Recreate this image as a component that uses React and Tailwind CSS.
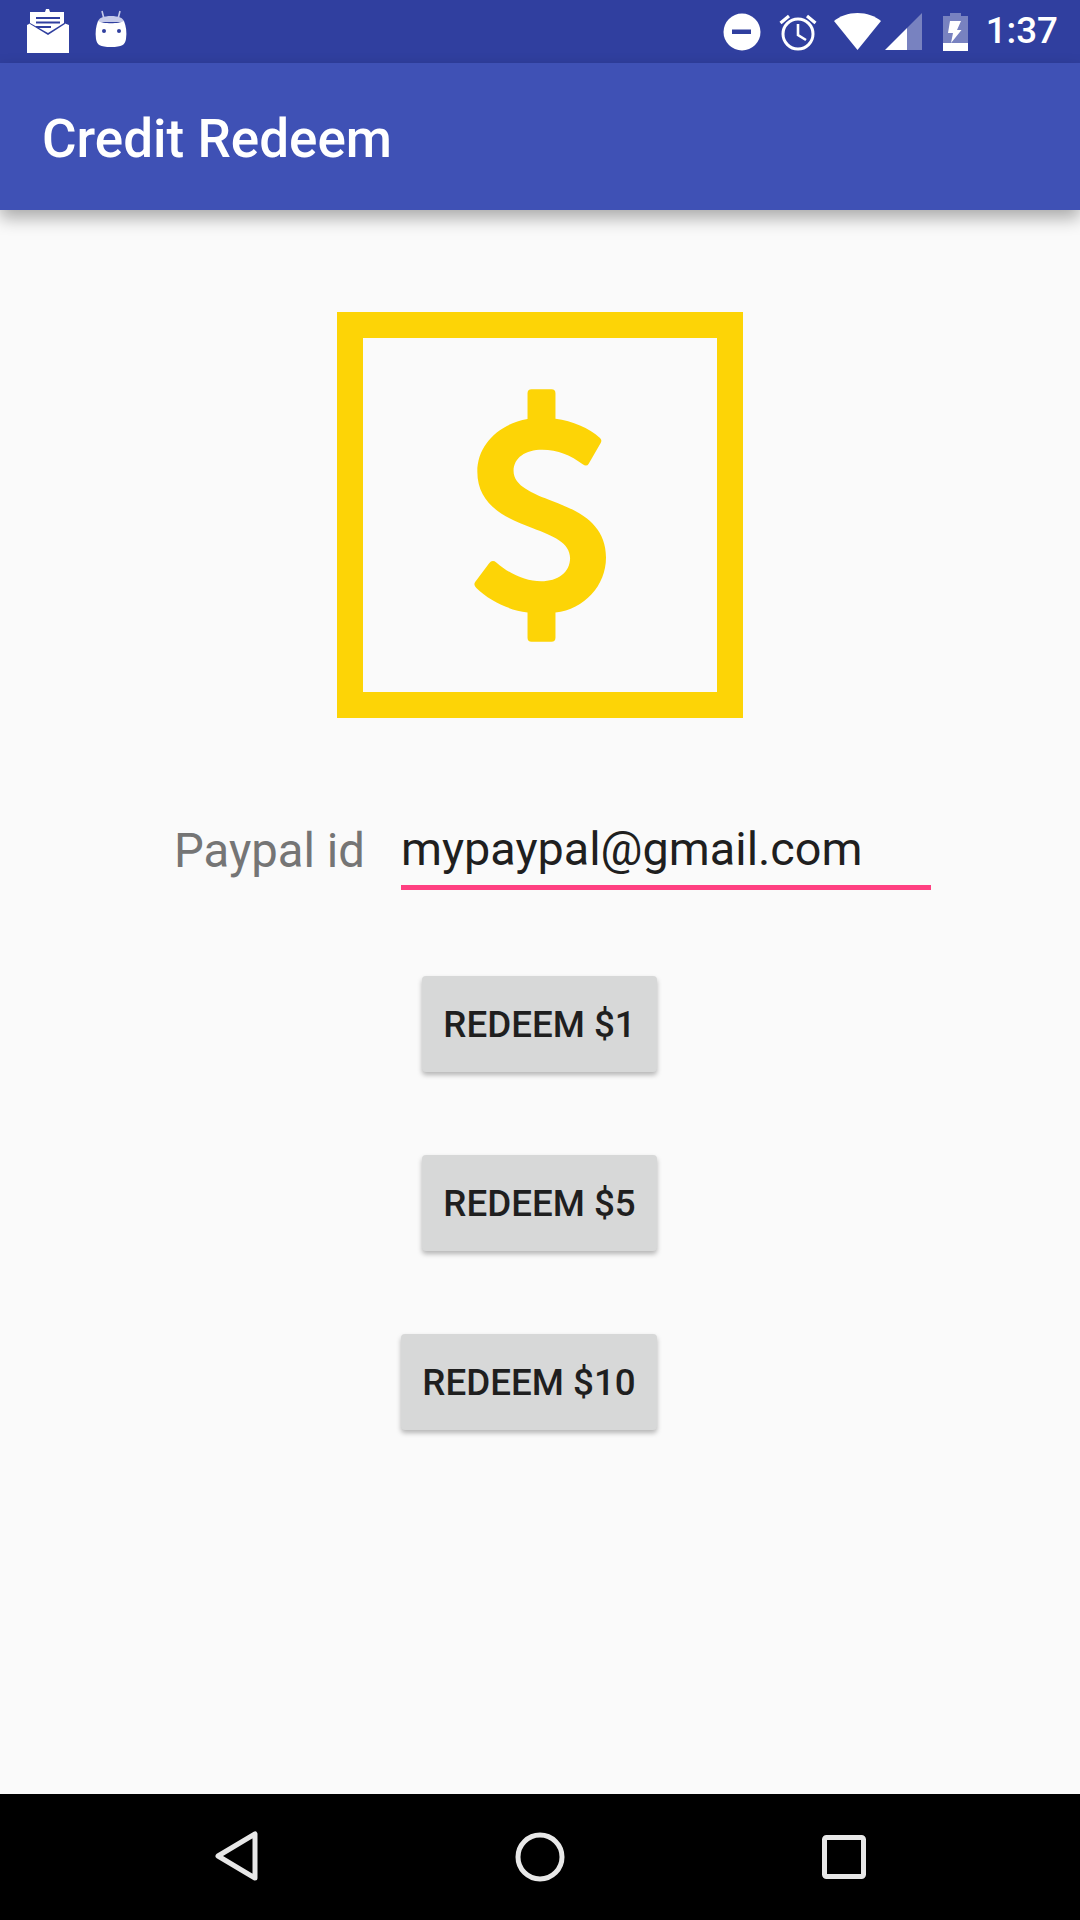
import React from "react";

function MailIcon() {
  return (
    <svg width="42" height="44" viewBox="0 0 42 44">
      <path d="M3 3H37V14L21 24L3 14Z" fill="#fff" />
      <path d="M19 0h3l1 3h-5z" fill="#fff" />
      <path d="M9 8H33V10H9ZM9 12.5H33V14.500H9ZM9 17H24V19H9Z" fill="#303f9f" />
      <path d="M0 16L3 14.500V15L21 26L38 15V14.500L42 16V44H0Z" fill="#fff" />
    </svg>
  );
}

function BotIcon() {
  return (
    <svg width="32" height="38" viewBox="0 0 32 38">
      <path d="M7 1L9 9M25 1L23 9" stroke="#c5cae9" strokeWidth="1.6" fill="none" />
      <path d="M3 12C3 8 9 6 16 6C23 6 29 8 29 12Z" fill="#c5cae9" />
      <path d="M3 11C8 14 24 14 29 11C31 16 32 22 31 29C30 35 27 37 16 37C5 37 2 35 1 29C0 22 1 16 3 11Z" fill="#fff" />
      <circle cx="9" cy="21" r="2" fill="#303f9f" />
      <circle cx="24" cy="21" r="2" fill="#303f9f" />
    </svg>
  );
}

function DndIcon() {
  return (
    <svg width="38" height="38" viewBox="0 0 38 38">
      <circle cx="19" cy="19" r="18.5" fill="#fff" />
      <rect x="9" y="16.5" width="19" height="4.5" fill="#303f9f" />
    </svg>
  );
}

function AlarmIcon() {
  return (
    <svg width="38" height="38" viewBox="0 0 38 38" fill="none" stroke="#fff">
      <circle cx="19" cy="21" r="15" strokeWidth="3" />
      <path d="M19 11V22L27 27" strokeWidth="2.6" />
      <path d="M1.5 10L10 3M36.5 10L28 3" strokeWidth="3.2" />
    </svg>
  );
}

function WifiIcon() {
  return (
    <svg width="47" height="37" viewBox="0 0 47 37">
      <path d="M0 8C6 3 14 0 23.5 0C33 0 41 3 47 8L23.5 37Z" fill="#fff" />
    </svg>
  );
}

function SignalIcon() {
  return (
    <svg width="37" height="37" viewBox="0 0 37 37">
      <path d="M37 0V37H22V15Z" fill="#fff" fillOpacity="0.35" />
      <path d="M22 15V37H0Z" fill="#fff" />
    </svg>
  );
}

function BatteryIcon() {
  return (
    <svg width="25" height="38" viewBox="0 0 25 38">
      <path d="M0 3H7V0H18V3H25V30H0Z" fill="#fff" fillOpacity="0.35" />
      <rect x="0" y="30" width="25" height="8" fill="#fff" />
      <path d="M7 8H18L14 17H18.500L8 30L10 20H5Z" fill="#fff" />
    </svg>
  );
}

function DollarIcon() {
  return (
    <svg width="132" height="253" viewBox="463 264 397 760">
      <path
        d="M636 264H696Q708 264 708 276V353C760 360 808 380 842 411Q849 418 844 426L808 488Q802 498 790 490C755 463 715 446 668 446C618 446 582 470 582 510C582 555 640 578 700 601C780 631 860 670 860 770C860 855 795 925 708 936V1012Q708 1024 696 1024H636Q624 1024 624 1012V936C565 928 510 900 470 862Q460 852 467 843L508 788Q518 775 530 785C570 820 618 842 665 842C715 842 752 815 752 772C752 725 700 705 640 682C560 652 473 615 473 512C473 430 540 368 624 354V276Q624 264 636 264Z"
        fill="#fdd406"
      />
    </svg>
  );
}

function RedeemButton({ label, width }) {
  return (
    <button className={`${width} h-24 pt-[4px] whitespace-nowrap bg-[#d7d8d8] rounded-[4px] text-[36.75px] leading-none font-medium text-[#1f1f1f] shadow-[0_3px_5px_rgba(0,0,0,0.28)]`}>
      {label}
    </button>
  );
}

export default function App() {
  return (
    <div className="w-[1080px] h-[1920px] flex flex-col bg-[#fafafa] font-['Roboto',sans-serif] overflow-hidden">

      {/* status bar */}
      <div className="h-[63px] bg-[#303f9f] flex items-center text-white">
        <div className="ml-[27px] mt-[-1px]"><MailIcon /></div>
        <div className="ml-[26px] mt-[-6px]"><BotIcon /></div>
        <div className="ml-auto flex items-center">
          <DndIcon />
          <div className="ml-[18px]"><AlarmIcon /></div>
          <div className="ml-[17px]"><WifiIcon /></div>
          <div className="ml-[4px]"><SignalIcon /></div>
          <div className="ml-[21px]"><BatteryIcon /></div>
          <span className="ml-[18px] mr-[22px] text-[36.75px] leading-none font-medium">1:37</span>
        </div>
      </div>

      {/* app bar */}
      <div className="relative z-10 h-[147px] bg-[#3f51b5] flex items-center pl-[42px] pt-[6px] shadow-[0_8px_16px_rgba(0,0,0,0.32)]">
        <h1 className="text-[53px] leading-none font-medium text-white">Credit Redeem</h1>
      </div>

      {/* content */}
      <main className="flex-1 flex flex-col pt-[102px]">
        <div className="self-center w-[406px] h-[406px] border-[26px] border-[#fdd406] flex items-center justify-center">
          <DollarIcon />
        </div>

        <div className="mt-[107px] flex items-end">
          <span className="ml-[174px] w-[227px] pb-[15px] text-[47.25px] leading-none text-[#757575]">Paypal id</span>
          <div className="w-[530px] pb-[12px] pt-px border-b-[5px] border-[#ff4081] text-[46.75px] leading-none text-[#1f1f1f]">
            mypaypal@gmail.com
          </div>
        </div>

        <div className="ml-[401px] w-[256px] mt-[86px] flex flex-col items-end gap-[83px]">
          <RedeemButton label="REDEEM $1" width="w-[235px]" />
          <RedeemButton label="REDEEM $5" width="w-[235px]" />
          <RedeemButton label="REDEEM $10" width="w-[256px]" />
        </div>
      </main>

      {/* nav bar */}
      <div className="h-[126px] bg-black relative">
        <svg className="absolute left-[214px] top-[36px]" width="46" height="52" viewBox="0 0 46 52" fill="none" stroke="#e8e8e8" strokeWidth="5" strokeLinejoin="round">
          <path d="M41 4V48L4 26Z" />
        </svg>
        <svg className="absolute left-[513px] top-[36px]" width="54" height="54" viewBox="0 0 54 54" fill="none" stroke="#e8e8e8" strokeWidth="5">
          <circle cx="27" cy="27" r="22" />
        </svg>
        <svg className="absolute left-[822px] top-[41px]" width="44" height="44" viewBox="0 0 44 44" fill="none" stroke="#e8e8e8" strokeWidth="5" strokeLinejoin="round">
          <rect x="2.5" y="2.5" width="39" height="39" rx="2" />
        </svg>
      </div>
    </div>
  );
}
